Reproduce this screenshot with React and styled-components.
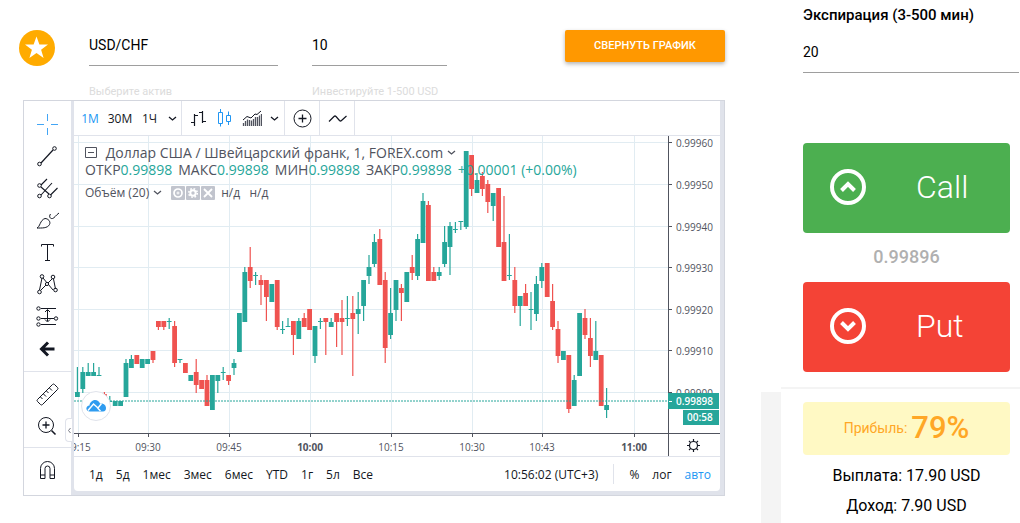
import React from "react";
import styled, { createGlobalStyle, css } from "styled-components";

const GlobalStyle = createGlobalStyle`
  *, *::before, *::after {
    box-sizing: border-box;
  }
  body {
    margin: 0;
    background: #fff;
    color: #000;
    font-family: Roboto, sans-serif;
  }
  button, input {
    margin: 0;
    padding: 0;
    border: 0;
    background: none;
    color: inherit;
    font: inherit;
  }
  button {
    cursor: pointer;
  }
  svg {
    display: block;
    flex: none;
  }
`;

const chartFont = `"Open Sans", "Noto Sans", sans-serif`;
const green = "#26a69a";
const red = "#ef5350";

const Page = styled.div`
  display: grid;
  grid-template-columns: minmax(0, 1fr) 20px 239px;
  min-height: 100vh;
`;

const Main = styled.main`
  padding: 30px 36px 27px 19px;
`;

const Gutter = styled.div`
  margin-top: 392px;
  background: #f4f4f4;
`;

const Header = styled.div`
  display: flex;
  align-items: flex-start;
  gap: 34px;
`;

const Favorite = styled.button`
  display: flex;
  align-items: center;
  justify-content: center;
  flex: none;
  width: 36px;
  height: 36px;
  border-radius: 50%;
  background: #ffab00;
`;

const Field = styled.div`
  display: flex;
  flex-direction: column;
  flex: 0 1 ${props => props.size};
  min-width: 0;
`;

const Input = styled.input`
  width: 100%;
  height: 36px;
  padding-bottom: 6px;
  border-bottom: 1px solid #9e9e9e;
  font-size: 14px;
  outline: none;
`;

const Hint = styled.label`
  margin-top: 17px;
  color: #dcdcdc;
  font-size: 11px;
  line-height: 17px;
  white-space: nowrap;
`;

const CollapseButton = styled.button`
  flex: none;
  width: 160px;
  height: 32px;
  margin-left: auto;
  padding-bottom: 2px;
  border-radius: 2px;
  background: #ff9800;
  box-shadow: 0 2px 4px rgba(0, 0, 0, 0.3);
  color: #fff;
  font-size: 11px;
  font-weight: 500;
`;

const Widget = styled.section`
  display: flex;
  gap: 3px;
  margin-left: 4px;
  padding: 0 4px 4px 0;
  border: 1px solid #d3d6de;
  background: #e0e3eb;
  color: #131722;
  font-family: ${chartFont};
`;

const DrawingBar = styled.div`
  position: relative;
  flex: none;
  width: 47px;
  margin-bottom: -4px;
  background: #fff;
`;

const DrawingGroup = styled.div`
  display: flex;
  flex-direction: column;
  align-items: center;
  padding: 7px 0;

  & + & {
    border-top: 1px solid #e0e3eb;
    padding: 6px 0 5px;
  }
`;

const DrawingButton = styled.button`
  display: flex;
  align-items: center;
  justify-content: center;
  width: 46px;
  height: 32px;
  color: ${props => (props.$active ? "#42a5f5" : "#131722")};
`;

const Handle = styled.button`
  position: absolute;
  right: -1px;
  bottom: 53px;
  display: flex;
  align-items: center;
  justify-content: center;
  width: 7px;
  height: 24px;
  border: 1px solid #e0e3eb;
  border-right: 0;
  border-radius: 4px 0 0 4px;
  background: #fff;
  color: #787b86;
`;

const ChartColumn = styled.div`
  flex: 1;
  min-width: 0;
  overflow: hidden;
  border-radius: 0 0 4px 4px;
  background: #fff;
`;

const TopBar = styled.div`
  display: flex;
  height: 35px;
  border-bottom: 1px solid #e0e3eb;
`;

const TopGroup = styled.div`
  display: flex;
  align-items: stretch;
  padding-left: ${props => props.$inset || "0"};
  border-right: 1px solid #e0e3eb;
`;

const TopButton = styled.button`
  display: flex;
  align-items: center;
  justify-content: center;
  width: ${props => props.$width};
  color: ${props => (props.$active ? "#2196f3" : "#131722")};
  font-size: 12px;
`;

const ChartArea = styled.div`
  position: relative;
`;

const Plot = styled.svg`
  width: 100%;
  height: auto;
  font-family: ${chartFont};
`;

const Legend = styled.div`
  position: absolute;
  top: 8px;
  left: 11px;
  color: #50535e;
  white-space: nowrap;
`;

const LegendRow = styled.div`
  display: flex;
  align-items: center;
  gap: ${props => props.$gap};
  height: 17px;
  font-size: ${props => props.$size};

  &:last-child {
    margin-top: 6px;
  }
`;

const Value = styled.span`
  color: ${green};
  font-weight: 500;
`;

const ToolGroup = styled.span`
  display: flex;
  gap: 1px;
  margin: 0 2px 0 5px;
`;

const ToolButton = styled.button`
  display: flex;
  align-items: center;
  justify-content: center;
  width: 14px;
  height: 14px;
  border-radius: 1px;
  background: #c1c4cd;
  color: #fff;
`;

const BottomBar = styled.div`
  display: flex;
  align-items: center;
  height: 35px;
  padding: 0 9px 0 15px;
  border-top: 1px solid #e0e3eb;
`;

const Ranges = styled.div`
  display: flex;
  gap: 13px;
`;

const Scales = styled.div`
  display: flex;
  align-items: center;
  gap: 13px;
  height: 20px;
  margin-left: 15px;
  padding-left: 15px;
  border-left: 1px solid #e0e3eb;
`;

const BottomButton = styled.button`
  color: ${props => (props.$active ? "#2196f3" : "#131722")};
  font-size: 12px;
  white-space: nowrap;

  ${props =>
    props.$end &&
    css`
      margin-left: auto;
    `}
`;

const Side = styled.aside`
  display: flex;
  flex-direction: column;
`;

const Trade = styled.div`
  display: flex;
  flex-direction: column;
  padding: 4px 10px 15px 22px;
  border-bottom: 2px solid #f4f4f4;
`;

const Expiration = styled.div`
  display: flex;
  flex-direction: column;
  margin: 0 -9px 70px 0;
`;

const ExpirationLabel = styled.label`
  margin-bottom: 11px;
  font-size: 15px;
  font-weight: 500;
  line-height: 22px;
`;

const TradeButton = styled.button`
  display: flex;
  align-items: center;
  gap: 50px;
  height: 90px;
  padding: 0 0 2px 27px;
  border-radius: 4px;
  background: ${props => props.$color};
  color: #fff;
  font-size: 32px;
  font-weight: 300;
`;

const Price = styled.div`
  height: 49px;
  color: #b0b0b0;
  font-size: 18px;
  font-weight: 500;
  line-height: 48px;
  text-align: center;
`;

const Result = styled.div`
  padding: 13px 10px 0 22px;
  font-size: 16px;
  line-height: 30px;
  text-align: center;
`;

const Profit = styled.div`
  display: flex;
  align-items: center;
  justify-content: center;
  gap: 4px;
  height: 53px;
  margin-bottom: 6px;
  padding-bottom: 2px;
  border-radius: 4px;
  background: #fff9c4;
  color: #ffa726;
  font-size: 14px;

  strong {
    font-size: 31px;
    font-weight: 500;
  }
`;

const Icon = ({ size = 24, children }) => (
  <svg
    width={size}
    height={size}
    viewBox={`0 0 ${size} ${size}`}
    fill="none"
    stroke="currentColor"
    strokeWidth="1"
    aria-hidden="true"
  >
    {children}
  </svg>
);

const Chevron = () => (
  <Icon size={9}>
    <path d="M1 3l3.5 3L8 3" strokeWidth="1.3" />
  </Icon>
);

const drawingGroups = [
  [
    {
      name: "Курсор",
      active: true,
      icon: <path d="M12.5 2v7M12.5 16v7M2 12.5h7M16 12.5h7" />
    },
    {
      name: "Линия тренда",
      icon: (
        <>
          <path d="M6 19L18 6" strokeWidth="1.2" />
          <circle cx="4.5" cy="20" r="1.8" />
          <circle cx="19.5" cy="4.5" r="1.8" />
        </>
      )
    },
    {
      name: "Вилы",
      icon: (
        <>
          <path d="M6 9l6-6M6 19L17 7M15.5 19l7-7M6 11l8 7" strokeWidth="1.1" />
          <circle cx="4.5" cy="9.5" r="1.8" />
          <circle cx="4.5" cy="20" r="1.8" />
          <circle cx="14.5" cy="20" r="1.8" />
        </>
      )
    },
    {
      name: "Кисть",
      icon: (
        <path d="M2 20c3-1 3-8 8-9.5c3 0 6 3 4.5 6c-2 4-8 3.5-12.5 3.5zM15.5 6c-2 3 0 5 2 4.5c2-.5 3-3 6.500-5.5" />
      )
    },
    {
      name: "Текст",
      icon: <path d="M6.5 6.500V4.5h12v2M12.5 4.5v16M10 20.5h5" />
    },
    {
      name: "Фигуры",
      icon: (
        <>
          <path d="M4.5 18L7 6M8 6l10 12M6 18L17 7M18.5 7l2 10" />
          <circle cx="7" cy="4.5" r="1.8" />
          <circle cx="4.5" cy="20" r="1.8" />
          <circle cx="18" cy="5" r="1.8" />
          <circle cx="20.5" cy="18" r="1.8" />
          <circle cx="12" cy="12" r="1.6" fill="#fff" />
        </>
      )
    },
    {
      name: "Прогноз",
      icon: (
        <>
          <path d="M6 4.5h15M6 14.5h13M6 20.5h15M12.5 6v11M10 8l2.5-2.5L15 8M10 15.500l2.5 2.5l2.5-2.5" />
          <circle cx="3.5" cy="4.5" r="1.7" />
          <circle cx="3.5" cy="14.5" r="1.7" />
          <circle cx="21" cy="14.5" r="1.7" fill="#fff" />
          <circle cx="3.5" cy="20.5" r="1.7" />
        </>
      )
    },
    {
      name: "Стрелка",
      icon: <path d="M19.5 13H7M13 6.5L6.5 13L13 19.5" strokeWidth="3" />
    }
  ],
  [
    {
      name: "Линейка",
      icon: (
        <path d="M2.5 17.5L17.5 2.5q1-1 2 0l3 3q1 1 0 2L7.5 22.5q-1 1-2 0l-3-3q-1-1 0-2zM5.5 15l2 2M8.5 12l2.5 2.5M11.5 9l2 2M14.5 6l2.500 2.5" />
      )
    },
    {
      name: "Увеличить",
      icon: (
        <>
          <circle cx="11" cy="11" r="7.5" />
          <path d="M11 7.5v7M7.5 11h7" strokeWidth="1.3" />
          <path d="M16.5 16.5l4 4" strokeWidth="1.6" />
        </>
      )
    }
  ],
  [
    {
      name: "Магнит",
      icon: (
        <path d="M5.5 20.5v-10a7 7 0 0 1 14 0v10h-4.500v-10a2.5 2.5 0 0 0-5 0v10zM5.5 17H10M15 17h4.5" />
      )
    }
  ]
];

const ranges = ["1д", "5д", "1мес", "3мес", "6мес", "YTD", "1г", "5л", "Все"];

const ohlc = [
  ["ОТКР", "0.99898"],
  ["МАКС", "0.99898"],
  ["МИН", "0.99898"],
  ["ЗАКР", "0.99898"]
];

const priceTicks = [
  ["0.99960", 142],
  ["0.99950", 184],
  ["0.99940", 226],
  ["0.99930", 267],
  ["0.99920", 309],
  ["0.99910", 350],
  ["0.99900", 392]
];

const timeTicks = [
  ["09:15", 78],
  ["09:30", 148],
  ["09:45", 229],
  ["10:00", 310, true],
  ["10:15", 391],
  ["10:30", 472],
  ["10:43", 542],
  ["11:00", 634, true]
];

// direction, wick top, body top, body bottom, wick bottom
const candles = [
  ["g", 367, 392, 397, 397],
  ["g", 367, 372, 389, 393],
  ["g", 363, 372, 376, 376],
  ["g", 363, 372, 376, 376],
  ["g", 367, 375, 376, 376],
  ["r", 392, 394, 401, 403],
  ["g", 396, 401, 402, 402],
  ["g", 401, 401, 406, 406],
  ["g", 401, 401, 406, 406],
  ["g", 359, 363, 397, 397],
  ["g", 355, 359, 368, 368],
  ["r", 355, 355, 364, 364],
  ["g", 359, 359, 368, 368],
  ["g", 359, 359, 364, 364],
  ["r", 351, 351, 360, 363],
  ["r", 321, 321, 327, 330],
  ["r", 321, 321, 327, 330],
  ["g", 318, 321, 322, 329],
  ["r", 321, 326, 363, 367],
  ["g", 359, 359, 360, 363],
  ["r", 363, 363, 373, 373],
  ["g", 375, 375, 381, 381],
  ["r", 359, 372, 385, 393],
  ["r", 380, 380, 389, 389],
  ["r", 375, 380, 406, 406],
  ["g", 375, 375, 410, 410],
  ["g", 375, 375, 381, 393],
  ["g", 367, 372, 373, 380],
  ["r", 375, 375, 381, 385],
  ["g", 359, 363, 368, 375],
  ["g", 313, 313, 352, 352],
  ["g", 267, 272, 322, 322],
  ["r", 247, 267, 281, 288],
  ["g", 272, 275, 276, 285],
  ["r", 275, 280, 285, 305],
  ["r", 280, 280, 297, 321],
  ["g", 284, 284, 302, 302],
  ["r", 280, 280, 327, 330],
  ["g", 321, 329, 330, 334],
  ["g", 318, 326, 327, 327],
  ["r", 321, 321, 335, 355],
  ["g", 318, 321, 339, 339],
  ["r", 313, 318, 327, 327],
  ["r", 309, 309, 330, 330],
  ["g", 326, 326, 356, 363],
  ["g", 318, 321, 322, 329],
  ["r", 318, 318, 322, 355],
  ["g", 318, 322, 327, 327],
  ["r", 313, 313, 322, 347],
  ["r", 300, 318, 322, 355],
  ["g", 296, 318, 319, 326],
  ["r", 296, 313, 319, 376],
  ["g", 292, 309, 314, 334],
  ["g", 280, 280, 306, 321],
  ["g", 255, 267, 276, 284],
  ["g", 234, 242, 264, 267],
  ["r", 229, 239, 285, 285],
  ["r", 272, 280, 348, 363],
  ["g", 288, 313, 335, 339],
  ["g", 280, 280, 310, 321],
  ["r", 284, 288, 293, 321],
  ["g", 272, 272, 302, 302],
  ["r", 255, 267, 273, 280],
  ["g", 234, 239, 276, 280],
  ["g", 193, 201, 243, 243],
  ["r", 201, 205, 281, 281],
  ["r", 267, 272, 281, 281],
  ["g", 267, 272, 276, 280],
  ["g", 226, 242, 264, 267],
  ["g", 222, 226, 247, 275],
  ["g", 222, 229, 230, 233],
  ["g", 221, 221, 222, 230],
  ["g", 151, 151, 227, 229],
  ["r", 155, 155, 189, 196],
  ["g", 173, 180, 193, 193],
  ["r", 172, 176, 189, 196],
  ["r", 180, 184, 202, 213],
  ["g", 193, 193, 206, 221],
  ["r", 188, 188, 247, 247],
  ["r", 196, 242, 281, 281],
  ["g", 234, 275, 276, 280],
  ["r", 267, 280, 306, 313],
  ["g", 296, 296, 306, 326],
  ["r", 284, 293, 306, 306],
  ["g", 292, 309, 310, 330],
  ["g", 276, 284, 314, 321],
  ["g", 263, 267, 281, 288],
  ["r", 263, 263, 297, 297],
  ["r", 284, 301, 327, 330],
  ["r", 321, 329, 356, 363],
  ["g", 351, 351, 360, 360],
  ["r", 355, 355, 409, 413],
  ["g", 375, 380, 406, 406],
  ["g", 313, 313, 376, 376],
  ["r", 309, 318, 335, 339],
  ["r", 318, 338, 356, 367],
  ["g", 321, 351, 360, 360],
  ["r", 355, 355, 406, 406],
  ["g", 388, 405, 410, 418]
];

const Candle = ({ x, data: [direction, high, top, bottom, low] }) => (
  <g fill={direction === "g" ? green : red}>
    <rect x={x - 0.6} y={high} width="1.2" height={low - high} />
    <rect x={x - 2.4} y={top} width="4.8" height={bottom - top} />
  </g>
);

const Chart = () => (
  <Plot viewBox="74 136 646 320" role="img" aria-label="USD/CHF">
    <g stroke="#e1ecf2">
      {priceTicks.map(([label, y]) => (
        <line key={label} x1="74" x2="668" y1={y + 0.5} y2={y + 0.5} />
      ))}
      {timeTicks.map(([label, x]) => (
        <line key={label} x1={x + 0.5} x2={x + 0.5} y1="136" y2="433" />
      ))}
    </g>
    {candles.map((data, i) => (
      <Candle key={i} x={77.4 + i * 5.4} data={data} />
    ))}
    <line x1="74" x2="668" y1="401" y2="401" stroke={green} strokeDasharray="2 1" />
    <g stroke="#50535e">
      <path d="M74 433.5H720M668.5 136V456" />
      {priceTicks.map(([label, y]) => (
        <line key={label} x1="668" x2="672" y1={y + 0.5} y2={y + 0.5} />
      ))}
      {timeTicks.map(([label, x]) => (
        <line key={label} x1={x + 0.5} x2={x + 0.5} y1="433" y2="437" />
      ))}
    </g>
    <g fill="#50535e" fontSize="10">
      {priceTicks.map(([label, y]) => (
        <text key={label} x="676" y={y + 5}>
          {label}
        </text>
      ))}
      {timeTicks.map(([label, x, bold]) => (
        <text key={label} x={x} y="451" textAnchor="middle" fontWeight={bold ? 700 : 400}>
          {label}
        </text>
      ))}
    </g>
    <path d="M668 393h51v16h-51zM683 410h36v15h-36z" fill={green} />
    <path d="M669 401.5h3" stroke="#fff" />
    <g fill="#fff" fontSize="10" fontWeight="600">
      <text x="676" y="405">0.99898</text>
      <text x="687" y="421">00:58</text>
    </g>
    <g stroke="#131722" fill="none" strokeWidth="1.2">
      <circle cx="693.5" cy="445.5" r="4" />
      <path d="M693.5 439v2.5M693.5 449.5v2.5M687 445.5h2.5M697.5 445.5h2.5M689 441l1.7 1.7M696.3 448.3l1.7 1.7M698 441l-1.7 1.7M690.7 448.3l-1.7 1.7" />
    </g>
    <circle cx="96" cy="406" r="14.5" fill="#fff" stroke="#e0e3eb" />
    <path
      d="M90 411.5c-5 0-4.5-6-.5-6c0-3 3-5.5 5.5-5.5s4 1.5 5 3.5c4-.5 6 2 6 4.5c0 2-1 3.5-3 3.5z"
      fill="#2f9cf0"
    />
    <path
      d="M88 410.5l5.5-6.5l4.5 4l3.5-4.5M97.5 408l3 3"
      fill="none"
      stroke="#fff"
      strokeWidth="1.4"
    />
  </Plot>
);

const DrawingTools = () => (
  <DrawingBar>
    {drawingGroups.map((group, i) => (
      <DrawingGroup key={i}>
        {group.map(({ name, icon, active }) => (
          <DrawingButton key={name} aria-label={name} $active={active}>
            <Icon size={25}>{icon}</Icon>
          </DrawingButton>
        ))}
      </DrawingGroup>
    ))}
    <Handle aria-label="Свернуть панель">
      <Icon size={5}>
        <path d="M3.5 0L1.5 2.5L3.5 5" />
      </Icon>
    </Handle>
  </DrawingBar>
);

const Toolbar = () => (
  <TopBar>
    <TopGroup $inset="1px">
      <TopButton $width="30px" $active>
        1М
      </TopButton>
      <TopButton $width="30px">30М</TopButton>
      <TopButton $width="29px">1Ч</TopButton>
      <TopButton $width="17px" aria-label="Интервалы">
        <Chevron />
      </TopButton>
    </TopGroup>
    <TopGroup $inset="2px">
      <TopButton $width="27px" aria-label="Бары">
        <Icon size={18}>
          <path d="M5.5 5v12M2 13.5h3.5M5.5 6.5H9M13.5 2v12M10 3.5h3.5M13.5 12.5H17" strokeWidth="1.2" />
        </Icon>
      </TopButton>
      <TopButton $width="27px" $active aria-label="Свечи">
        <Icon size={18}>
          <path d="M2.5 3.5h4v11h-4zM4.5 0v3.5M4.5 14.5v3M10.500 6.5h4v6h-4zM12.5 2.5v4M12.5 12.5v3.5" />
        </Icon>
      </TopButton>
      <TopButton $width="27px" aria-label="Область">
        <Icon size={20}>
          <path d="M1 12l4-3.5l4 1.5l4-4l2 .5l4-3.5" />
          <path
            d="M1.500 15v3M3.5 13v5M5.5 11.5V18M7.5 12V18M9.5 12.5V18M11.5 11V18M13.5 9V18M15.5 9V18M17.5 7.500V18M19.500 6V18"
            stroke="#50535e"
            strokeWidth="1.3"
          />
        </Icon>
      </TopButton>
      <TopButton $width="19px" aria-label="Типы графика">
        <Chevron />
      </TopButton>
    </TopGroup>
    <TopGroup>
      <TopButton $width="34px" aria-label="Сравнить">
        <Icon size={19}>
          <circle cx="9.5" cy="9.5" r="8.5" />
          <path d="M9.5 5.5v8M5.5 9.5h8" strokeWidth="1.3" />
        </Icon>
      </TopButton>
    </TopGroup>
    <TopGroup>
      <TopButton $width="34px" aria-label="Индикаторы">
        <Icon size={19}>
          <path d="M1 12.5L6 7.5q1-1 2 0l3.5 4q1 1 2 0L18.500 7" strokeWidth="1.2" />
        </Icon>
      </TopButton>
    </TopGroup>
  </TopBar>
);

const ChartLegend = () => (
  <Legend>
    <LegendRow $size="14px" $gap="4px">
      <Icon size={13}>
        <path d="M.5 1.5h11v10H.5zM3 6.5h6" />
      </Icon>
      <span>&nbsp;Доллар США / Швейцарский франк, 1, FOREX.com</span>
      <Chevron />
    </LegendRow>
    <LegendRow $size="14px" $gap="6px">
      {ohlc.map(([label, value]) => (
        <span key={label}>
          {label}
          <Value>{value}</Value>
        </span>
      ))}
      <Value>+0.00001 (+0.00%)</Value>
    </LegendRow>
    <LegendRow $size="12px" $gap="4px">
      <span>Объём (20)</span>
      <Chevron />
      <ToolGroup>
        <ToolButton aria-label="Скрыть">
          <Icon size={12}>
            <circle cx="6" cy="6" r="4" strokeWidth="1.7" />
            <circle cx="6" cy="6" r="1" />
          </Icon>
        </ToolButton>
        <ToolButton aria-label="Настроить">
          <Icon size={12}>
            <circle cx="6" cy="6" r="2.7" strokeWidth="2" />
            <circle cx="6" cy="6" r="4.3" strokeWidth="1.5" strokeDasharray="1.7 1.68" />
          </Icon>
        </ToolButton>
        <ToolButton aria-label="Удалить">
          <Icon size={12}>
            <path d="M2 2l8 8M10 2l-8 8" strokeWidth="1.8" />
          </Icon>
        </ToolButton>
      </ToolGroup>
      <span>н/д&nbsp;&nbsp; н/д</span>
    </LegendRow>
  </Legend>
);

const Direction = ({ d }) => (
  <svg width="36" height="36" viewBox="0 0 36 36" fill="none" stroke="#fff" strokeWidth="4" aria-hidden="true">
    <circle cx="18" cy="18" r="16" />
    <path d={d} />
  </svg>
);

const App = () => (
  <>
    <GlobalStyle />
    <Page>
      <Main>
        <Header>
          <Favorite aria-label="В избранное">
            <svg width="24" height="24" viewBox="0 0 24 24" fill="#fff" aria-hidden="true">
              <path d="M11.5 .5l2.9 8h8.6l-6.9 5.2l2.5 8.3l-7.1-4.9l-7.1 4.9l2.5-8.3L0 8.5h8.6z" />
            </svg>
          </Favorite>
          <Field size="189px">
            <Input id="asset" defaultValue="USD/CHF" />
            <Hint htmlFor="asset">Выберите актив</Hint>
          </Field>
          <Field size="135px">
            <Input id="amount" defaultValue="10" />
            <Hint htmlFor="amount">Инвестируйте 1-500 USD</Hint>
          </Field>
          <CollapseButton>СВЕРНУТЬ ГРАФИК</CollapseButton>
        </Header>
        <Widget>
          <DrawingTools />
          <ChartColumn>
            <Toolbar />
            <ChartArea>
              <Chart />
              <ChartLegend />
            </ChartArea>
            <BottomBar>
              <Ranges>
                {ranges.map(range => (
                  <BottomButton key={range}>{range}</BottomButton>
                ))}
              </Ranges>
              <BottomButton $end>10:56:02 (UTC+3)</BottomButton>
              <Scales>
                <BottomButton>%</BottomButton>
                <BottomButton>лог</BottomButton>
                <BottomButton $active>авто</BottomButton>
              </Scales>
            </BottomBar>
          </ChartColumn>
        </Widget>
      </Main>
      <Gutter />
      <Side>
        <Trade>
          <Expiration>
            <ExpirationLabel htmlFor="expiration">Экспирация (3-500 мин)</ExpirationLabel>
            <Input id="expiration" defaultValue="20" />
          </Expiration>
          <TradeButton $color="#4caf50">
            <Direction d="M11.5 21.5L18 15l6.5 6.5" />
            Call
          </TradeButton>
          <Price>0.99896</Price>
          <TradeButton $color="#f44336">
            <Direction d="M11.5 14.5L18 21l6.5-6.5" />
            Put
          </TradeButton>
        </Trade>
        <Result>
          <Profit>
            Прибыль: <strong>79%</strong>
          </Profit>
          <div>Выплата: 17.90 USD</div>
          <div>Доход: 7.90 USD</div>
        </Result>
      </Side>
    </Page>
  </>
);

export default App;
